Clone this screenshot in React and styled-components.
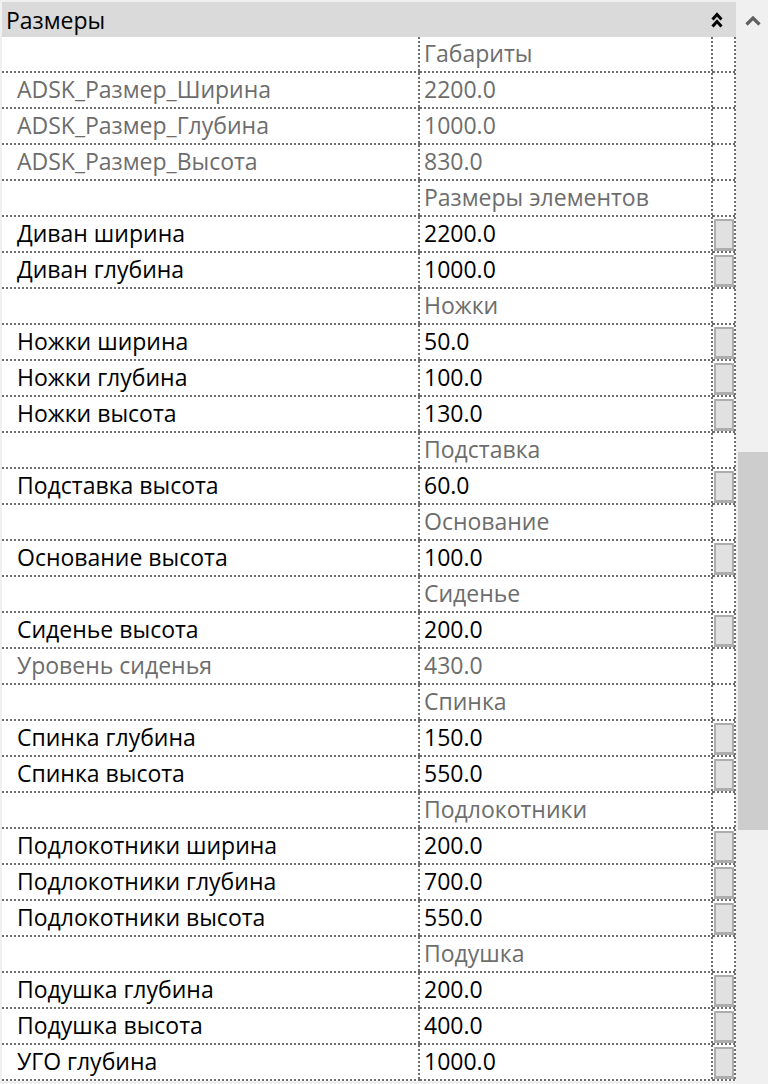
import styled, { createGlobalStyle } from "styled-components";

const GlobalStyle = createGlobalStyle`
  html, body {
    margin: 0;
    padding: 0;
    background: #f0f0f0;
  }
  body {
    font-family: "Open Sans", "Noto Sans", sans-serif;
  }
`;

const rows = [
  { cat: "Габариты" },
  { label: "ADSK_Размер_Ширина", value: "2200.0", dim: true },
  { label: "ADSK_Размер_Глубина", value: "1000.0", dim: true },
  { label: "ADSK_Размер_Высота", value: "830.0", dim: true },
  { cat: "Размеры элементов" },
  { label: "Диван ширина", value: "2200.0" },
  { label: "Диван глубина", value: "1000.0" },
  { cat: "Ножки" },
  { label: "Ножки ширина", value: "50.0" },
  { label: "Ножки глубина", value: "100.0" },
  { label: "Ножки высота", value: "130.0" },
  { cat: "Подставка" },
  { label: "Подставка высота", value: "60.0" },
  { cat: "Основание" },
  { label: "Основание высота", value: "100.0" },
  { cat: "Сиденье" },
  { label: "Сиденье высота", value: "200.0" },
  { label: "Уровень сиденья", value: "430.0", dim: true },
  { cat: "Спинка" },
  { label: "Спинка глубина", value: "150.0" },
  { label: "Спинка высота", value: "550.0" },
  { cat: "Подлокотники" },
  { label: "Подлокотники ширина", value: "200.0" },
  { label: "Подлокотники глубина", value: "700.0" },
  { label: "Подлокотники высота", value: "550.0" },
  { cat: "Подушка" },
  { label: "Подушка глубина", value: "200.0" },
  { label: "Подушка высота", value: "400.0" },
  { label: "УГО глубина", value: "1000.0" },
];

const DOT = "#6f6f6f";

const Page = styled.div`
  display: flex;
  width: 768px;
  height: 1084px;
  padding-left: 2px;
  box-sizing: border-box;
  overflow: hidden;
`;

const Panel = styled.div`
  width: 734px;
  margin-top: 2px;
  display: flex;
  flex-direction: column;
`;

const Header = styled.div`
  height: 35px;
  background: #dadada;
  display: flex;
  align-items: center;
  justify-content: space-between;
  padding: 0 13px 0 4px;
  font-size: 23px;
  color: #000;
`;

const Row = styled.div`
  display: grid;
  grid-template-columns: 418px 293px 23px;
  height: 36px;
  background: #fff;
`;

const Cell = styled.div`
  box-sizing: border-box;
  height: 36px;
  padding: 0 0 2px ${({ $pad }) => $pad}px;
  line-height: 33px;
  font-size: 23px;
  white-space: nowrap;
  overflow: hidden;
  color: ${({ $dim }) => ($dim ? "#6d6d6d" : "#000")};
  background-image:
    repeating-linear-gradient(to right, ${DOT} 0 2px, transparent 2px 4px),
    repeating-linear-gradient(to bottom, ${DOT} 0 2px, transparent 2px 4px);
  background-size: 100% 2px, 2px 100%;
  background-position: left bottom, right top;
  background-repeat: no-repeat;
`;

const EditButton = styled.div`
  box-sizing: border-box;
  width: 20px;
  height: 32px;
  margin: 2px 0 0 1px;
  background: #e1e1e1;
  border: 2px solid #adadad;
  border-bottom-width: 3px;
`;

const ScrollBar = styled.div`
  width: 30px;
  margin-left: 2px;
  display: flex;
  flex-direction: column;
  background: #f0f0f0;
`;

const ArrowBox = styled.div`
  height: 40px;
  display: flex;
  align-items: center;
  justify-content: center;
`;

const Thumb = styled.div`
  margin-top: 412px;
  height: 378px;
  background: #cdcdcd;
`;

const CollapseIcon = () => (
  <svg width="12" height="16" viewBox="0 0 12 16">
    <polyline points="1.5,7.5 6,2.5 10.5,7.5" fill="none" stroke="#000" strokeWidth="3" />
    <polyline points="1.5,14.5 6,9.5 10.5,14.5" fill="none" stroke="#000" strokeWidth="3" />
  </svg>
);

const UpArrow = () => (
  <svg width="16" height="11" viewBox="0 0 16 11">
    <polyline points="1.5,9.5 8,3 14.5,9.5" fill="none" stroke="#606060" strokeWidth="3.2" />
  </svg>
);

export default function App() {
  return (
    <>
      <GlobalStyle />
      <Page>
        <Panel>
          <Header>
            <span>Размеры</span>
            <CollapseIcon />
          </Header>
          {rows.map((r, i) =>
            r.cat ? (
              <Row key={i}>
                <Cell $pad={15} />
                <Cell $pad={4} $dim>{r.cat}</Cell>
                <Cell $pad={0} />
              </Row>
            ) : (
              <Row key={i}>
                <Cell $pad={15} $dim={r.dim}>{r.label}</Cell>
                <Cell $pad={4} $dim={r.dim}>{r.value}</Cell>
                <Cell $pad={0}>{!r.dim && <EditButton />}</Cell>
              </Row>
            )
          )}
        </Panel>
        <ScrollBar>
          <ArrowBox>
            <UpArrow />
          </ArrowBox>
          <Thumb />
        </ScrollBar>
      </Page>
    </>
  );
}
